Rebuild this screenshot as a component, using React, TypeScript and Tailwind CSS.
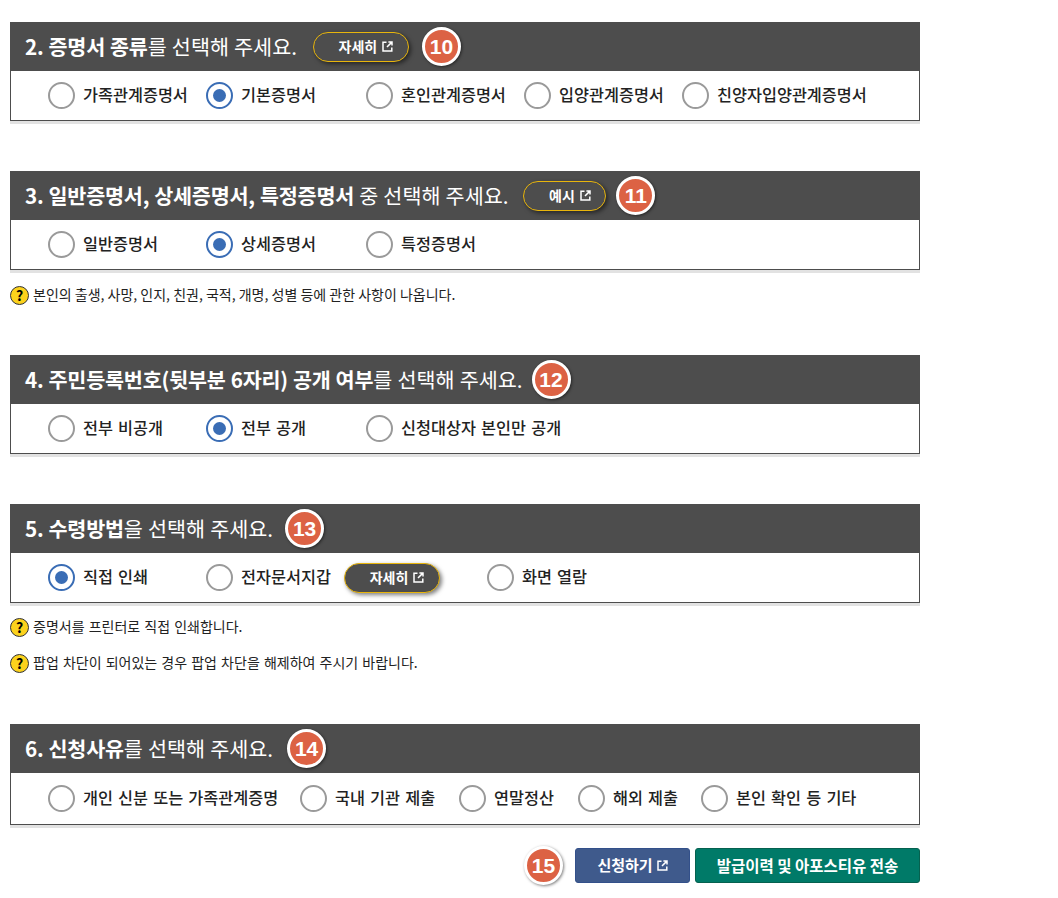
function LinkGlyph() {
  return (
    <svg width="11" height="11" viewBox="0 0 11 11" fill="none" stroke="currentColor" strokeWidth="1.5" className="shrink-0">
      <path d="M4.5 1.2H1v8.8h8.8V6.5" />
      <path d="M5 6l4.6-4.6M6.4 1h3.6v3.6" />
    </svg>
  )
}

function Badge({ n }: { n: number }) {
  return (
    <span className="flex h-[39px] w-[39px] shrink-0 items-center justify-center rounded-full border-[3px] border-white bg-[#dc6244] text-[21px] font-bold text-white shadow-[1px_1px_3px_rgba(0,0,0,0.5)] font-['Liberation_Sans',sans-serif]">
      {n}
    </span>
  )
}

function Pill({ label, width }: { label: string; width: string }) {
  return (
    <span
      className={`flex h-[30px] shrink-0 items-center justify-center gap-[5px] rounded-full border border-[#e8b50c] bg-[#4d4d4d] pl-[10px] text-[14px] font-bold text-white shadow-[2px_2px_4px_rgba(0,0,0,0.5)] ${width}`}
    >
      {label}
      <LinkGlyph />
    </span>
  )
}

function Radio({ label, checked, width }: { label: string; checked?: boolean; width: string }) {
  return (
    <label className={`flex items-center gap-[8px] ${width}`}>
      <span
        className={`flex h-[27px] w-[27px] shrink-0 items-center justify-center rounded-full border-2 bg-white ${
          checked ? 'border-[#3a6db5]' : 'border-[#9a9a9a]'
        }`}
      >
        {checked && <span className="h-[13px] w-[13px] rounded-full bg-[#3a6db5]" />}
      </span>
      <span className="whitespace-nowrap pb-[2px] text-[16.3px] font-medium text-[#222] [word-spacing:1.5px]">{label}</span>
    </label>
  )
}

function Section({
  title,
  rest,
  badge,
  badgeGap,
  pill,
  tall,
  children,
}: {
  title: string
  rest: string
  badge: number
  badgeGap: string
  pill?: React.ReactNode
  tall?: boolean
  children: React.ReactNode
}) {
  return (
    <section className="shadow-[0_3px_0_#e2e2e2]">
      <div className="flex h-[49px] items-center bg-[#4d4d4d] pl-[15px] text-white">
        <h3 className="whitespace-nowrap text-[20.7px] font-normal [word-spacing:0.5px]">
          <b className="font-bold tracking-[-0.2px]">{title}</b>
          {rest}
        </h3>
        {pill}
        <span className={badgeGap}>
          <Badge n={badge} />
        </span>
      </div>
      <div className={`flex items-center border border-t-0 border-[#4d4d4d] bg-white pl-[37px] ${tall ? 'h-[52px]' : 'h-[50px]'}`}>
        {children}
      </div>
    </section>
  )
}

function Note({ text, spaced }: { text: string; spaced?: boolean }) {
  return (
    <p className={`flex h-[36px] items-center gap-[4px] text-[14px] text-[#222] ${spaced ? '[word-spacing:1px]' : ''}`}>
      <span className="flex h-[19px] w-[19px] shrink-0 items-center justify-center rounded-full border border-[#333] bg-[#fcd21c] text-[14px] font-bold leading-none text-black">?</span>
      <span className="pb-[2px]">{text}</span>
    </p>
  )
}

export default function App() {
  return (
    <div className="min-h-[898px] w-[1058px] bg-white pl-[10px] pt-[22px] font-['Noto_Sans_CJK_KR','Noto_Sans',sans-serif]">
      <div className="w-[910px]">
        <div className="mb-[50px]">
          <Section
            title="2. 증명서 종류"
            rest="를 선택해 주세요."
            badge={10}
            badgeGap="ml-[13px]"
            pill={<span className="ml-[16px]"><Pill label="자세히" width="w-[96px]" /></span>}
          >
            <Radio label="가족관계증명서" width="w-[158px]" />
            <Radio label="기본증명서" checked width="w-[160px]" />
            <Radio label="혼인관계증명서" width="w-[158px]" />
            <Radio label="입양관계증명서" width="w-[158px]" />
            <Radio label="친양자입양관계증명서" width="w-[200px]" />
          </Section>
        </div>

        <Section
          title="3. 일반증명서, 상세증명서, 특정증명서"
          rest=" 중 선택해 주세요."
          badge={11}
          badgeGap="ml-[10px]"
          pill={<span className="ml-[15px]"><Pill label="예시" width="w-[83px]" /></span>}
        >
          <Radio label="일반증명서" width="w-[158px]" />
          <Radio label="상세증명서" checked width="w-[160px]" />
          <Radio label="특정증명서" width="w-[158px]" />
        </Section>
        <div className="mb-[42px] pt-[7px]">
          <Note text="본인의 출생, 사망, 인지, 친권, 국적, 개명, 성별 등에 관한 사항이 나옵니다." />
        </div>

        <div className="mb-[50px]">
          <Section title="4. 주민등록번호(뒷부분 6자리) 공개 여부" rest="를 선택해 주세요." badge={12} badgeGap="ml-[9px]">
            <Radio label="전부 비공개" width="w-[158px]" />
            <Radio label="전부 공개" checked width="w-[160px]" />
            <Radio label="신청대상자 본인만 공개" width="w-[220px]" />
          </Section>
        </div>

        <Section title="5. 수령방법" rest="을 선택해 주세요." badge={13} badgeGap="ml-[12px]">
          <Radio label="직접 인쇄" checked width="w-[158px]" />
          <Radio label="전자문서지갑" width="w-[138px]" />
          <Pill label="자세히" width="w-[96px]" />
          <span className="ml-[47px]">
            <Radio label="화면 열람" width="w-[120px]" />
          </span>
        </Section>
        <div className="mb-[43px] pt-[6px]">
          <Note text="증명서를 프린터로 직접 인쇄합니다." spaced />
          <Note text="팝업 차단이 되어있는 경우 팝업 차단을 해제하여 주시기 바랍니다." spaced />
        </div>

        <Section title="6. 신청사유" rest="를 선택해 주세요." badge={14} badgeGap="ml-[14px]" tall>
          <Radio label="개인 신분 또는 가족관계증명" width="w-[252px]" />
          <Radio label="국내 기관 제출" width="w-[159px]" />
          <Radio label="연말정산" width="w-[119px]" />
          <Radio label="해외 제출" width="w-[123px]" />
          <Radio label="본인 확인 등 기타" width="w-[170px]" />
        </Section>

        <div className="mt-[21px] flex items-center justify-end">
          <Badge n={15} />
          <button className="ml-[12px] flex h-[35px] w-[115px] items-center justify-center gap-[4px] rounded-[3px] border border-[#33508a] bg-[#3f5a8c] text-[15px] font-bold text-white">
            신청하기
            <LinkGlyph />
          </button>
          <button className="ml-[5px] h-[35px] w-[225px] rounded-[3px] border border-[#06614f] bg-[#007a68] text-[15.5px] font-bold text-white">
            발급이력 및 아포스티유 전송
          </button>
        </div>
      </div>
    </div>
  )
}
